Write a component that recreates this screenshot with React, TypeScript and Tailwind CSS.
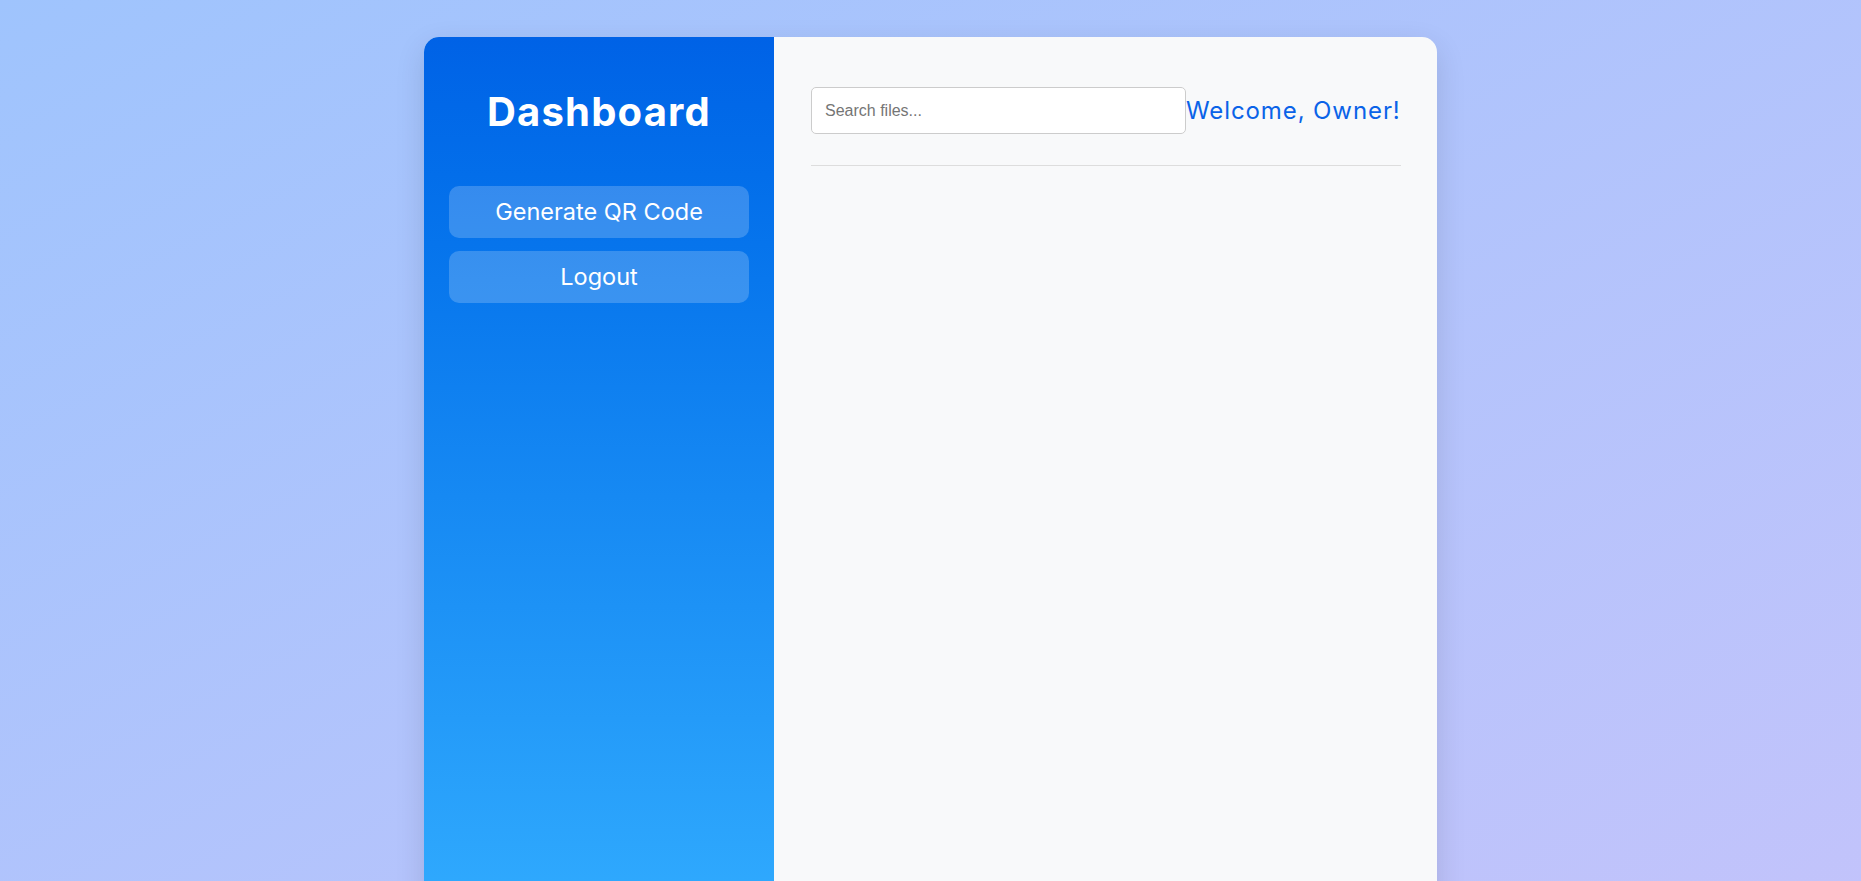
import React from "react";

export default function App() {
  return (
    <div className="min-h-screen w-full bg-gradient-to-br from-[#9fc4fd] to-[#c3c3fb] pt-[37px] overflow-hidden">
      <div className="mx-auto flex w-[1013px] h-[920px] rounded-[15px] overflow-hidden bg-[#f8f9fa] shadow-[0_10px_30px_rgba(0,0,0,0.12)]">
        <aside className="w-[350px] shrink-0 bg-gradient-to-b from-[#0062e6] to-[#33aeff] px-[25px] pt-[51px] text-white font-['Inter',sans-serif]">
          <h2 className="text-center text-[40px] leading-[48px] font-bold tracking-[1.2px]">
            Dashboard
          </h2>
          <nav className="mt-[50px] flex flex-col gap-[13px]">
            <button className="h-[52px] w-full rounded-[10px] bg-white/20 text-[23.5px] font-normal text-white">
              Generate QR Code
            </button>
            <button className="h-[52px] w-full rounded-[10px] bg-white/20 text-[23.5px] font-normal text-white">
              Logout
            </button>
          </nav>
        </aside>
        <main className="flex-1 px-[37px] pt-[50px]">
          <div className="flex items-center justify-between border-b border-[#dddddd] pb-[31px]">
            <input
              type="text"
              placeholder="Search files..."
              className="h-[47px] w-[375px] shrink-0 rounded-[5px] border border-[#cccccc] bg-white px-[13px] text-[16px] font-['Liberation_Sans',Arial,sans-serif] placeholder:text-[#757575] outline-none"
            />
            <span className="whitespace-nowrap text-[24px] leading-[30px] text-[#0a63e8] font-['Inter',sans-serif] tracking-[0.9px]">
              Welcome, Owner!
            </span>
          </div>
        </main>
      </div>
    </div>
  );
}
